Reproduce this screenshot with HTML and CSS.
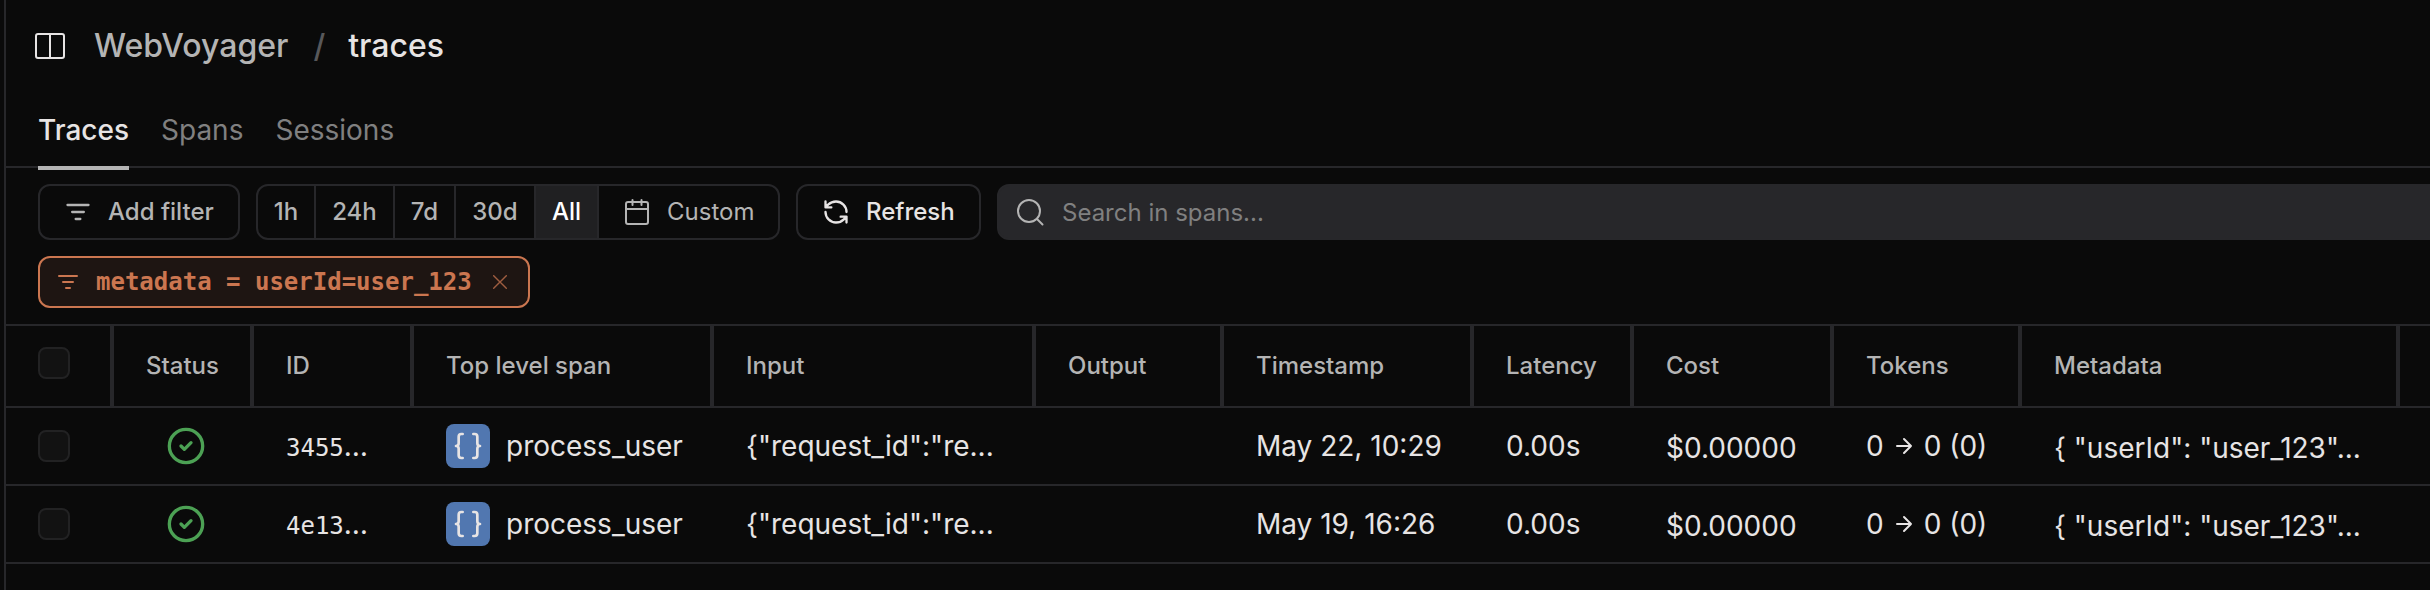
FILE: index.html
```html
<!DOCTYPE html>
<html lang="en">
<head>
<meta charset="utf-8">
<title>Traces</title>
<link rel="stylesheet" href="styles.css">
</head>
<body>
<svg class="sprite" width="0" height="0">
  <symbol id="filter" viewBox="0 0 24 24"><path d="M3 6h18M7 12h10M10 18h4"/></symbol>
  <symbol id="check" viewBox="0 0 24 24"><circle cx="12" cy="12" r="10"/><path d="m9 12 2 2 4-4"/></symbol>
  <symbol id="braces" viewBox="0 0 24 24"><path d="M8 3H7a2 2 0 0 0-2 2v5a2 2 0 0 1-2 2 2 2 0 0 1 2 2v5c0 1.100.9 2 2 2h1M16 21h1a2 2 0 0 0 2-2v-5c0-1.100.9-2 2-2a2 2 0 0 1-2-2V5a2 2 0 0 0-2-2h-1"/></symbol>
  <symbol id="arrow" viewBox="0 0 24 24"><path d="M5 12h14M12 5l7 7-7 7"/></symbol>
</svg>
<main class="page">
  <header class="crumbs">
    <svg class="icon panel" viewBox="0 0 30 26"><rect x="1" y="1" width="28" height="24" rx="2"/><path d="M15 1v24"/></svg>
    <span class="project">WebVoyager</span>
    <span class="slash">/</span>
    <span class="current">traces</span>
  </header>
  <nav class="tabs">
    <a class="tab active">Traces</a>
    <a class="tab">Spans</a>
    <a class="tab">Sessions</a>
  </nav>
  <div class="toolbar">
    <button class="btn add"><svg class="icon i28"><use href="#filter"/></svg><span class="label">Add filter</span></button>
    <div class="range">
      <span class="seg s1"><span class="label">1h</span></span>
      <span class="seg s2"><span class="label">24h</span></span>
      <span class="seg s3"><span class="label">7d</span></span>
      <span class="seg s4"><span class="label">30d</span></span>
      <span class="seg s5 on"><span class="label">All</span></span>
      <span class="seg custom"><svg class="icon cal" viewBox="0 0 24 26"><rect x="1" y="3" width="22" height="22" rx="2"/><path d="M1 10h22M7.500 1v5M16.500 1v5"/></svg><span class="label">Custom</span></span>
    </div>
    <button class="btn refresh"><svg class="icon i28" viewBox="0 0 24 24"><path d="M21 12a9 9 0 0 0-9-9 9.750 9.750 0 0 0-6.740 2.740L3 8M3 3v5h5M3 12a9 9 0 0 0 9 9 9.750 9.750 0 0 0 6.740-2.740L21 16M16 16h5v5"/></svg><span class="label">Refresh</span></button>
    <div class="search"><svg class="icon lens" viewBox="0 0 28 28"><circle cx="13" cy="13" r="11"/><path d="m21 21 5.500 5.500"/></svg><span class="hint">Search in spans...</span></div>
  </div>
  <div class="filters">
    <div class="chip"><svg class="icon i24"><use href="#filter"/></svg><span>metadata = userId=user_123</span><svg class="icon close" viewBox="0 0 14 14"><path d="M.7.7l12.600 12.600M13.300.7.7 13.300"/></svg></div>
  </div>
  <section class="table">
    <div class="row head">
      <div class="cell"><i class="box"></i></div>
      <div class="cell"><span class="label">Status</span></div>
      <div class="cell"><span class="label">ID</span></div>
      <div class="cell"><span class="label">Top level span</span></div>
      <div class="cell"><span class="label">Input</span></div>
      <div class="cell"><span class="label">Output</span></div>
      <div class="cell"><span class="label">Timestamp</span></div>
      <div class="cell"><span class="label">Latency</span></div>
      <div class="cell"><span class="label">Cost</span></div>
      <div class="cell"><span class="label">Tokens</span></div>
      <div class="cell"><span class="label">Metadata</span></div>
    </div>
    <div class="row">
      <div class="cell"><i class="box"></i></div>
      <div class="cell status"><svg class="icon ok"><use href="#check"/></svg></div>
      <div class="cell"><span><span class="id">3455</span>…</span></div>
      <div class="cell"><b class="kind"><svg class="icon"><use href="#braces"/></svg></b>process_user</div>
      <div class="cell">{"request_id":"re...</div>
      <div class="cell"></div>
      <div class="cell">May 22, 10:29</div>
      <div class="cell">0.00s</div>
      <div class="cell low">$0.00000</div>
      <div class="cell tokens">0<svg class="icon"><use href="#arrow"/></svg>0 (0)</div>
      <div class="cell low">{ "userId": "user_123"...</div>
    </div>
    <div class="row">
      <div class="cell"><i class="box"></i></div>
      <div class="cell status"><svg class="icon ok"><use href="#check"/></svg></div>
      <div class="cell"><span><span class="id">4e13</span>…</span></div>
      <div class="cell"><b class="kind"><svg class="icon"><use href="#braces"/></svg></b>process_user</div>
      <div class="cell">{"request_id":"re...</div>
      <div class="cell"></div>
      <div class="cell">May 19, 16:26</div>
      <div class="cell">0.00s</div>
      <div class="cell low">$0.00000</div>
      <div class="cell tokens">0<svg class="icon"><use href="#arrow"/></svg>0 (0)</div>
      <div class="cell low">{ "userId": "user_123"...</div>
    </div>
  </section>
</main>
</body>
</html>
```
FILE: styles.css
```css
* { box-sizing: border-box; }
body { margin: 0; background: #0a0a0a; color: #e7e4e4; font-family: Inter, sans-serif; font-size: 28px; }
.sprite { position: absolute; }
.page { margin-left: 4px; height: 590px; border-left: 2px solid #27272a; overflow: hidden; white-space: nowrap; }
.icon { fill: none; stroke: currentColor; stroke-width: 2; stroke-linecap: round; stroke-linejoin: round; flex: none; }
.label { padding-bottom: 1px; }
.crumbs { height: 92px; display: flex; align-items: center; padding-left: 29px; font-size: 32px; font-weight: 500; }
.crumbs span { padding-bottom: 1px; }
.panel { width: 30px; height: 26px; }
.project { color: #b4b4b4; margin-left: 29px; }
.slash { color: #58585a; margin-left: 25px; }
.current { margin-left: 23px; }
.tabs { height: 76px; display: flex; gap: 32px; padding-left: 32px; border-bottom: 2px solid #27272a; }
.tab { height: 78px; padding-top: 21px; line-height: 34px; color: #808080; }
.tab.active { color: #e7e4e4; font-weight: 500; border-bottom: 4px solid #b4b4b4; }
.toolbar { display: flex; gap: 16px; padding: 16px 0 0 32px; font-size: 24px; }
.btn, .range, .search { height: 56px; border: 2px solid #27272a; border-radius: 12px; display: flex; align-items: center; flex: none; }
.btn { background: transparent; font: 500 24px Inter, sans-serif; color: #b4b4b4; padding: 0; }
.i28 { width: 28px; height: 28px; }
.i24 { width: 24px; height: 24px; }
.add { width: 202px; padding-left: 24px; gap: 16px; }
.range { width: 524px; color: #b4b4b4; overflow: hidden; }
.seg { height: 52px; display: flex; align-items: center; justify-content: center; border-right: 2px solid #27272a; font-weight: 500; }
.s1 { width: 58px; }
.s2 { width: 79px; }
.s3 { width: 61px; }
.s4 { width: 80px; }
.s5 { width: 63px; }
.on { background: #202022; color: #fff; }
.custom { border-right: 0; padding-left: 26px; gap: 18px; font-weight: 400; justify-content: flex-start; }
.cal { width: 24px; height: 26px; }
.refresh { width: 185px; padding-left: 24px; gap: 16px; color: #e7e4e4; }
.search { width: 1600px; background: #27272a; color: #808080; padding-left: 17px; gap: 18px; }
.hint { padding-top: 1px; }
.lens { width: 28px; height: 28px; color: #b4b4b4; }
.filters { padding: 16px 0 16px 32px; }
.chip { width: 492px; height: 52px; border: 2px solid #cb7650; border-radius: 12px; background: #1e1512; color: #cb7650; display: flex; align-items: center; padding-left: 16px; font: bold 24px "DejaVu Sans Mono", monospace; }
.chip span { margin-left: 16px; }
.close { width: 14px; height: 14px; margin-left: 21px; stroke-width: 1.4; opacity: .75; }
.table { border-top: 2px solid #27272a; }
.row { display: grid; grid-template-columns: 108px 140px 160px 300px 322px 188px 250px 160px 200px 188px 378px; height: 78px; border-bottom: 2px solid #27272a; }
.cell { padding: 0 0 0 32px; display: flex; align-items: center; min-width: 0; }
.head { height: 82px; font-size: 24px; font-weight: 500; color: #b4b4b4; }
.head .cell { border-right: 4px solid #27272a; }
.box { width: 32px; height: 32px; border: 2px solid #222223; border-radius: 8px; background: #121212; }
.head .box { margin-bottom: 6px; }
.status { padding-left: 52px; }
.ok { width: 40px; height: 40px; color: #4ca154; overflow: visible; }
.id { font: 24px "DejaVu Sans Mono", monospace; }
.kind { width: 44px; height: 44px; margin-right: 16px; border-radius: 8px; background: #5177b0; display: flex; align-items: center; justify-content: center; }
.kind .icon { width: 32px; height: 32px; }
.low { padding-top: 4px; }
.tokens .icon { width: 24px; height: 24px; margin: 0 8px; }
```
